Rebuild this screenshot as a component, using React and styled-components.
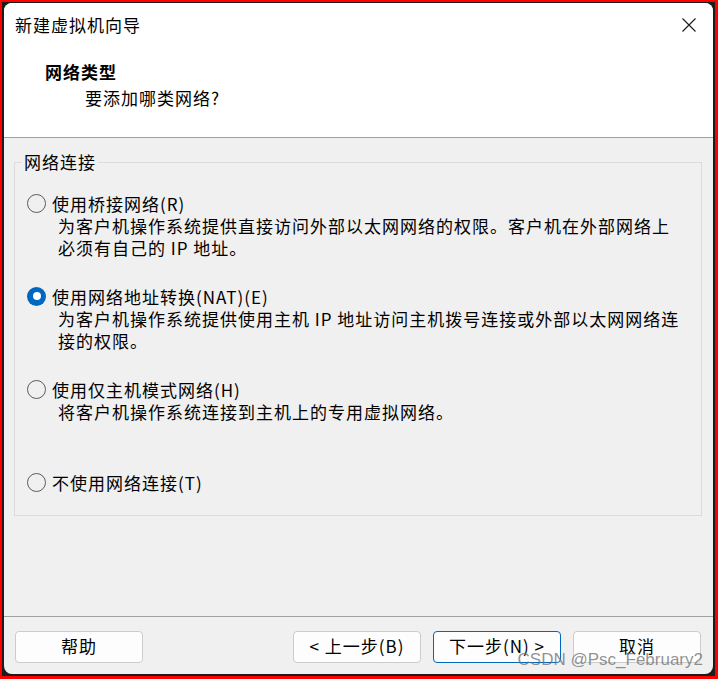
import React, { useState } from 'react';
import styled, { createGlobalStyle } from 'styled-components';

const GlobalStyle = createGlobalStyle`
  html, body {
    margin: 0;
    padding: 0;
    background: #ff0000;
  }
  * {
    box-sizing: border-box;
  }
`;

const cjk = `"Noto Sans CJK SC", "Noto Sans", sans-serif`;

const Frame = styled.div`
  width: 718px;
  height: 679px;
  border-style: solid;
  border-color: #ff0000;
  border-width: 2px 3px 3px 2px;
  background: #1c1c1c;
  padding: 1px 2px 2px 2px;
`;

const Window = styled.div`
  position: relative;
  width: 100%;
  height: 100%;
  border-radius: 8px;
  overflow: hidden;
  display: flex;
  flex-direction: column;
  background: #f0f0f0;
  font-family: ${cjk};
  font-size: 17px;
  letter-spacing: 1px;
  color: #000;
`;

const Header = styled.div`
  height: 135px;
  background: #fff;
  border-bottom: 1px solid #a0a0a0;
`;

const TitleBar = styled.div`
  height: 44px;
  display: flex;
  align-items: center;
  justify-content: space-between;
  padding: 0 16px 0 11px;
`;

const Title = styled.span`
  line-height: 24px;
`;

const CloseButton = styled.button`
  border: none;
  background: none;
  padding: 0;
  width: 16px;
  height: 16px;
  display: flex;
  cursor: pointer;
`;

const Heading = styled.div`
  margin-top: 12px;
  padding-left: 41px;
  line-height: 26px;
  font-weight: 700;
`;

const SubHeading = styled.div`
  padding-left: 81px;
  line-height: 26px;
`;

const Body = styled.div`
  flex: 1;
  padding: 24px 11px 0 10px;
`;

const GroupBox = styled.div`
  position: relative;
  height: 354px;
  border: 1px solid #dcdcdc;
  padding: 28px 12px 0 12px;
  display: flex;
  flex-direction: column;
  gap: 25px;
`;

const Legend = styled.span`
  position: absolute;
  top: -12px;
  left: 7px;
  padding: 0 2px;
  line-height: 22px;
  background: #f0f0f0;
`;

const Option = styled.div`
  display: flex;
  flex-direction: column;
`;

const OptionRow = styled.label`
  height: 24px;
  display: flex;
  align-items: center;
  gap: 6px;
  cursor: pointer;
`;

const RadioDot = styled.span`
  width: 19px;
  height: 19px;
  border-radius: 50%;
  flex-shrink: 0;
  display: flex;
  align-items: center;
  justify-content: center;
  border: ${p => (p.$checked ? 'none' : '1px solid #5c5c5c')};
  background: ${p => (p.$checked ? '#0067c0' : 'transparent')};

  &::after {
    content: '';
    display: ${p => (p.$checked ? 'block' : 'none')};
    width: 8px;
    height: 8px;
    border-radius: 50%;
    background: #fff;
  }
`;

const Description = styled.div`
  padding-left: 31px;
  line-height: 22px;
  min-height: 44px;
`;

const Footer = styled.div`
  height: 58px;
  border-top: 1px solid #a0a0a0;
  padding: 14px 12px 0 11px;
  display: flex;
  gap: 12px;
`;

const Spacer = styled.div`
  flex: 1;
`;

const Button = styled.button`
  width: 128px;
  height: 32px;
  border-radius: 4px;
  border: 1px solid ${p => (p.$primary ? '#0067c0' : '#cccccc')};
  background: #fdfdfd;
  font-family: ${cjk};
  font-size: 17px;
  line-height: 26px;
  letter-spacing: 1px;
  color: #000;
  padding: 0 0 2px;
  cursor: pointer;
`;

const Watermark = styled.div`
  position: absolute;
  right: 10px;
  bottom: 4px;
  font-family: "Liberation Sans", Arial, sans-serif;
  font-size: 17px;
  line-height: 20px;
  letter-spacing: 0;
  color: rgba(110, 110, 110, 0.75);
  pointer-events: none;
`;

const options = [
  {
    id: 'bridge',
    label: '使用桥接网络(R)',
    lines: ['为客户机操作系统提供直接访问外部以太网网络的权限。客户机在外部网络上', '必须有自己的 IP 地址。'],
  },
  {
    id: 'nat',
    label: '使用网络地址转换(NAT)(E)',
    lines: ['为客户机操作系统提供使用主机 IP 地址访问主机拨号连接或外部以太网网络连', '接的权限。'],
  },
  {
    id: 'host',
    label: '使用仅主机模式网络(H)',
    lines: ['将客户机操作系统连接到主机上的专用虚拟网络。'],
  },
  {
    id: 'none',
    label: '不使用网络连接(T)',
    lines: null,
  },
];

function CloseIcon() {
  return (
    <svg width="16" height="16" viewBox="0 0 16 16">
      <path d="M1.5 1.5 L14.5 14.5 M14.5 1.5 L1.5 14.5" stroke="#1a1a1a" strokeWidth="1.1" fill="none" />
    </svg>
  );
}

export default function App() {
  const [network, setNetwork] = useState('nat');

  return (
    <>
      <GlobalStyle />
      <Frame>
        <Window>
          <Header>
            <TitleBar>
              <Title>新建虚拟机向导</Title>
              <CloseButton aria-label="关闭">
                <CloseIcon />
              </CloseButton>
            </TitleBar>
            <Heading>网络类型</Heading>
            <SubHeading>要添加哪类网络?</SubHeading>
          </Header>

          <Body>
            <GroupBox>
              <Legend>网络连接</Legend>
              {options.map(opt => (
                <Option key={opt.id}>
                  <OptionRow onClick={() => setNetwork(opt.id)}>
                    <RadioDot $checked={network === opt.id} />
                    {opt.label}
                  </OptionRow>
                  {opt.lines && (
                    <Description>
                      {opt.lines.map(l => (
                        <div key={l}>{l}</div>
                      ))}
                    </Description>
                  )}
                </Option>
              ))}
            </GroupBox>
          </Body>

          <Footer>
            <Button>帮助</Button>
            <Spacer />
            <Button>&lt; 上一步(B)</Button>
            <Button $primary>下一步(N) &gt;</Button>
            <Button>取消</Button>
          </Footer>

          <Watermark>CSDN @Psc_February2</Watermark>
        </Window>
      </Frame>
    </>
  );
}
